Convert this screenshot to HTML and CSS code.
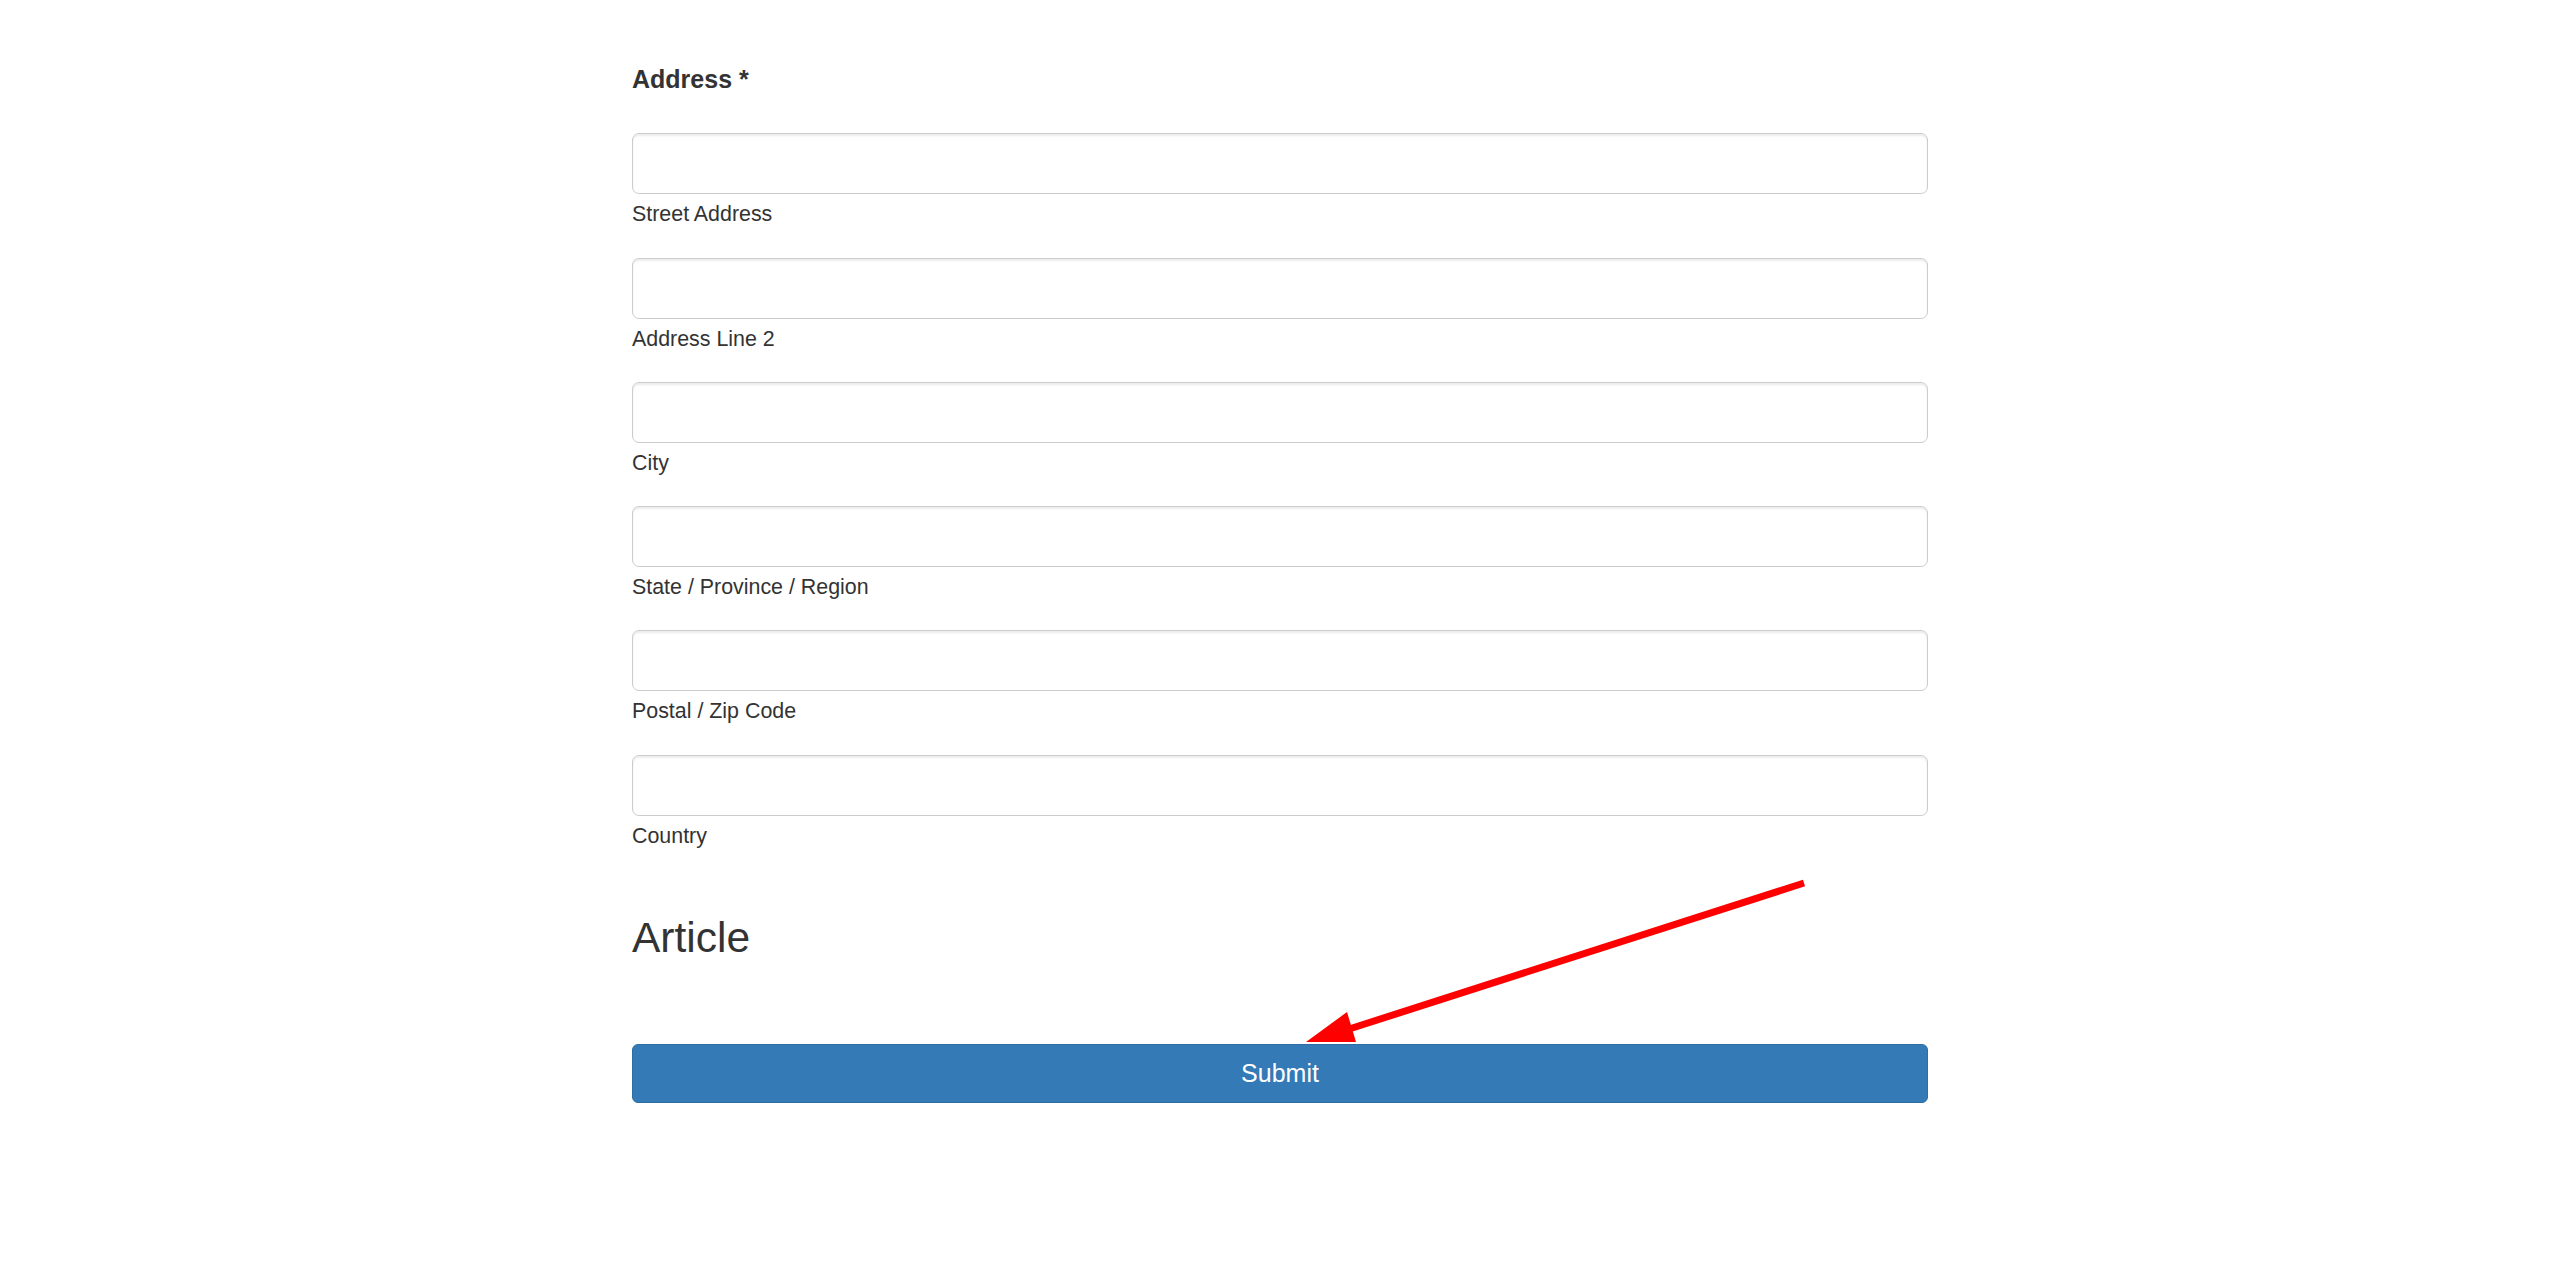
FILE: index.html
```html
<!DOCTYPE html>
<html lang="en">
<head>
<meta charset="utf-8">
<title>Address form</title>
<link rel="stylesheet" href="styles.css">
</head>
<body>
<div class="page">
  <form class="form-wrap">
    <div class="field-label">Address *</div>
    <div class="addr-row">
      <input class="form-control" type="text">
      <label class="sub-label">Street Address</label>
    </div>
    <div class="addr-row">
      <input class="form-control" type="text">
      <label class="sub-label">Address Line 2</label>
    </div>
    <div class="addr-row">
      <input class="form-control" type="text">
      <label class="sub-label">City</label>
    </div>
    <div class="addr-row">
      <input class="form-control" type="text">
      <label class="sub-label">State / Province / Region</label>
    </div>
    <div class="addr-row">
      <input class="form-control" type="text">
      <label class="sub-label">Postal / Zip Code</label>
    </div>
    <div class="addr-row">
      <input class="form-control" type="text">
      <label class="sub-label">Country</label>
    </div>
    <h3 class="section-title">Article</h3>
    <button type="button" class="btn-submit">Submit</button>
  </form>
  <svg class="annotation" width="2560" height="1264" viewBox="0 0 2560 1264" xmlns="http://www.w3.org/2000/svg">
    <line x1="1804" y1="883" x2="1343" y2="1031" stroke="#ff0000" stroke-width="7"/>
    <polygon points="1306,1042 1347,1012 1356,1042" fill="#ff0000"/>
  </svg>
</div>
</body>
</html>
```
FILE: styles.css
```css
html, body {
  margin: 0;
  padding: 0;
  background: #ffffff;
}
body {
  font-family: "Liberation Sans", Arial, sans-serif;
  color: #333333;
}
.page {
  position: relative;
  width: 2560px;
  min-height: 1264px;
}
.form-wrap {
  width: 1296px;
  margin: 0 auto;
  padding-top: 62px;
  display: flex;
  flex-direction: column;
}
.field-label {
  font-weight: bold;
  font-size: 25px;
  line-height: 35px;
  margin-bottom: 36.3px;
}
.addr-row {
  display: flex;
  flex-direction: column;
  margin-bottom: 28.25px;
}
.form-control {
  box-sizing: border-box;
  width: 100%;
  height: 61px;
  margin: 0;
  padding: 10px 21px;
  border: 1px solid #cccccc;
  border-radius: 7px;
  background: #ffffff;
  box-shadow: inset 0 2px 2px rgba(0, 0, 0, 0.075);
  font-family: "Liberation Sans", Arial, sans-serif;
  font-size: 24.5px;
  color: #555555;
  outline: none;
}
.sub-label {
  margin-top: 5px;
  font-size: 21.4px;
  line-height: 30px;
  color: #333333;
}
.section-title {
  margin: 36px 0 0;
  font-size: 42.5px;
  line-height: 46px;
  font-weight: normal;
  color: #333333;
}
.btn-submit {
  box-sizing: border-box;
  width: 100%;
  height: 59px;
  margin-top: 83px;
  padding: 0;
  border: 1px solid #2e6da4;
  border-radius: 6px;
  background: #337ab7;
  color: #ffffff;
  font-family: "Liberation Sans", Arial, sans-serif;
  font-size: 25px;
  line-height: 35px;
  display: flex;
  align-items: center;
  justify-content: center;
  cursor: pointer;
}
.annotation {
  position: absolute;
  left: 0;
  top: 0;
  pointer-events: none;
}
```
